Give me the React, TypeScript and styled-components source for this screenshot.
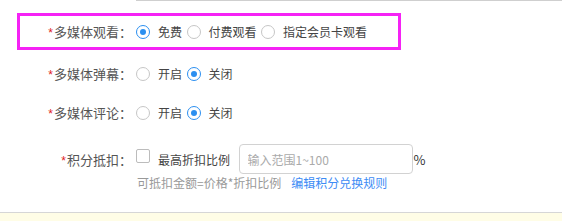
import * as React from "react";
import styled, { createGlobalStyle } from "styled-components";

const GlobalStyle = createGlobalStyle`
  body {
    margin: 0;
    background: #fff;
    font-family: "Noto Sans CJK SC", "Noto Sans", sans-serif;
  }
`;

const Page = styled.div`
  width: 562px;
  height: 221px;
  display: flex;
  flex-direction: column;
  overflow: hidden;
`;

const PrevField = styled.div`
  margin-left: 136px;
  height: 1px;
  background: #cfcfcf;
`;

const Row = styled.div<{ $highlight?: boolean; $gap?: number; $height?: number }>`
  display: flex;
  align-items: center;
  box-sizing: border-box;
  margin-top: ${(p) => p.$gap ?? 0}px;
  height: ${(p) => p.$height ?? 39}px;
  ${(p) =>
    p.$highlight &&
    `
    margin-left: 17px;
    width: 384px;
    border: 3px solid #f522f5;
  `}
`;

const Label = styled.div<{ $width: number }>`
  width: ${(p) => p.$width}px;
  flex: none;
  text-align: right;
  font-size: 13px;
  color: #555;
  white-space: nowrap;
`;

const Star = styled.span`
  font-family: "Liberation Sans", sans-serif;
  font-size: 12px;
  color: #e01b1b;
  margin-right: 1px;
`;

const Content = styled.div`
  margin-left: 4px;
  display: flex;
  align-items: center;
`;

const Option = styled.label`
  display: flex;
  align-items: center;
  gap: 8px;
  margin-right: 4.5px;
  font-size: 12px;
  color: #444;
  white-space: nowrap;
`;

const RadioDot = styled.span<{ $checked?: boolean }>`
  width: 14px;
  height: 14px;
  box-sizing: border-box;
  border-radius: 50%;
  border: 1px solid ${(p) => (p.$checked ? "#2b8ff0" : "#c6c6c6")};
  display: inline-flex;
  align-items: center;
  justify-content: center;
  &::after {
    content: "";
    width: 6px;
    height: 6px;
    border-radius: 50%;
    background: #2b8ff0;
    display: ${(p) => (p.$checked ? "block" : "none")};
  }
`;

const CheckBox = styled.span`
  width: 14px;
  height: 14px;
  box-sizing: border-box;
  border: 1px solid #bcbcbc;
  border-radius: 2px;
  margin-bottom: 6px;
`;

const Input = styled.input`
  margin-left: 4px;
  width: 174px;
  height: 30px;
  box-sizing: border-box;
  border: 1px solid #d2d2d2;
  border-radius: 4px;
  padding: 0 8px;
  font-family: inherit;
  font-size: 12px;
  color: #333;
  outline: none;
  &::placeholder {
    color: #aaa;
  }
`;

const Unit = styled.span`
  margin-left: 1px;
  font-size: 13px;
  color: #333;
`;

const Help = styled.div`
  margin: 1px 0 0 137px;
  line-height: 16px;
  font-size: 12px;
  color: #999;
  white-space: nowrap;
`;

const Link = styled.a`
  margin-left: 10px;
  color: #3d8cf5;
  text-decoration: none;
`;

const Footer = styled.div`
  margin-top: auto;
  height: 8px;
  border-top: 1px solid #d6d6d6;
  background: #fffde6;
`;

type RadioGroupProps = { options: string[]; value: string };

const RadioGroup: React.FC<RadioGroupProps> = ({ options, value }) => (
  <Content>
    {options.map((o) => (
      <Option key={o}>
        <RadioDot $checked={o === value} />
        {o}
      </Option>
    ))}
  </Content>
);

export default function App() {
  return (
    <Page>
      <GlobalStyle />
      <PrevField />
      <Row $highlight $gap={12} $height={37}>
        <Label $width={112}>
          <Star>*</Star>多媒体观看：
        </Label>
        <RadioGroup options={["免费", "付费观看", "指定会员卡观看"]} value="免费" />
      </Row>
      <Row $gap={4}>
        <Label $width={132}>
          <Star>*</Star>多媒体弹幕：
        </Label>
        <RadioGroup options={["开启", "关闭"]} value="关闭" />
      </Row>
      <Row>
        <Label $width={132}>
          <Star>*</Star>多媒体评论：
        </Label>
        <RadioGroup options={["开启", "关闭"]} value="关闭" />
      </Row>
      <Row $gap={12} $height={30}>
        <Label $width={132}>
          <Star>*</Star>积分抵扣：
        </Label>
        <Content>
          <Option>
            <CheckBox />
            最高折扣比例
          </Option>
          <Input placeholder="输入范围1~100" />
          <Unit>%</Unit>
        </Content>
      </Row>
      <Help>
        可抵扣金额=价格*折扣比例
        <Link href="#">编辑积分兑换规则</Link>
      </Help>
      <Footer />
    </Page>
  );
}
